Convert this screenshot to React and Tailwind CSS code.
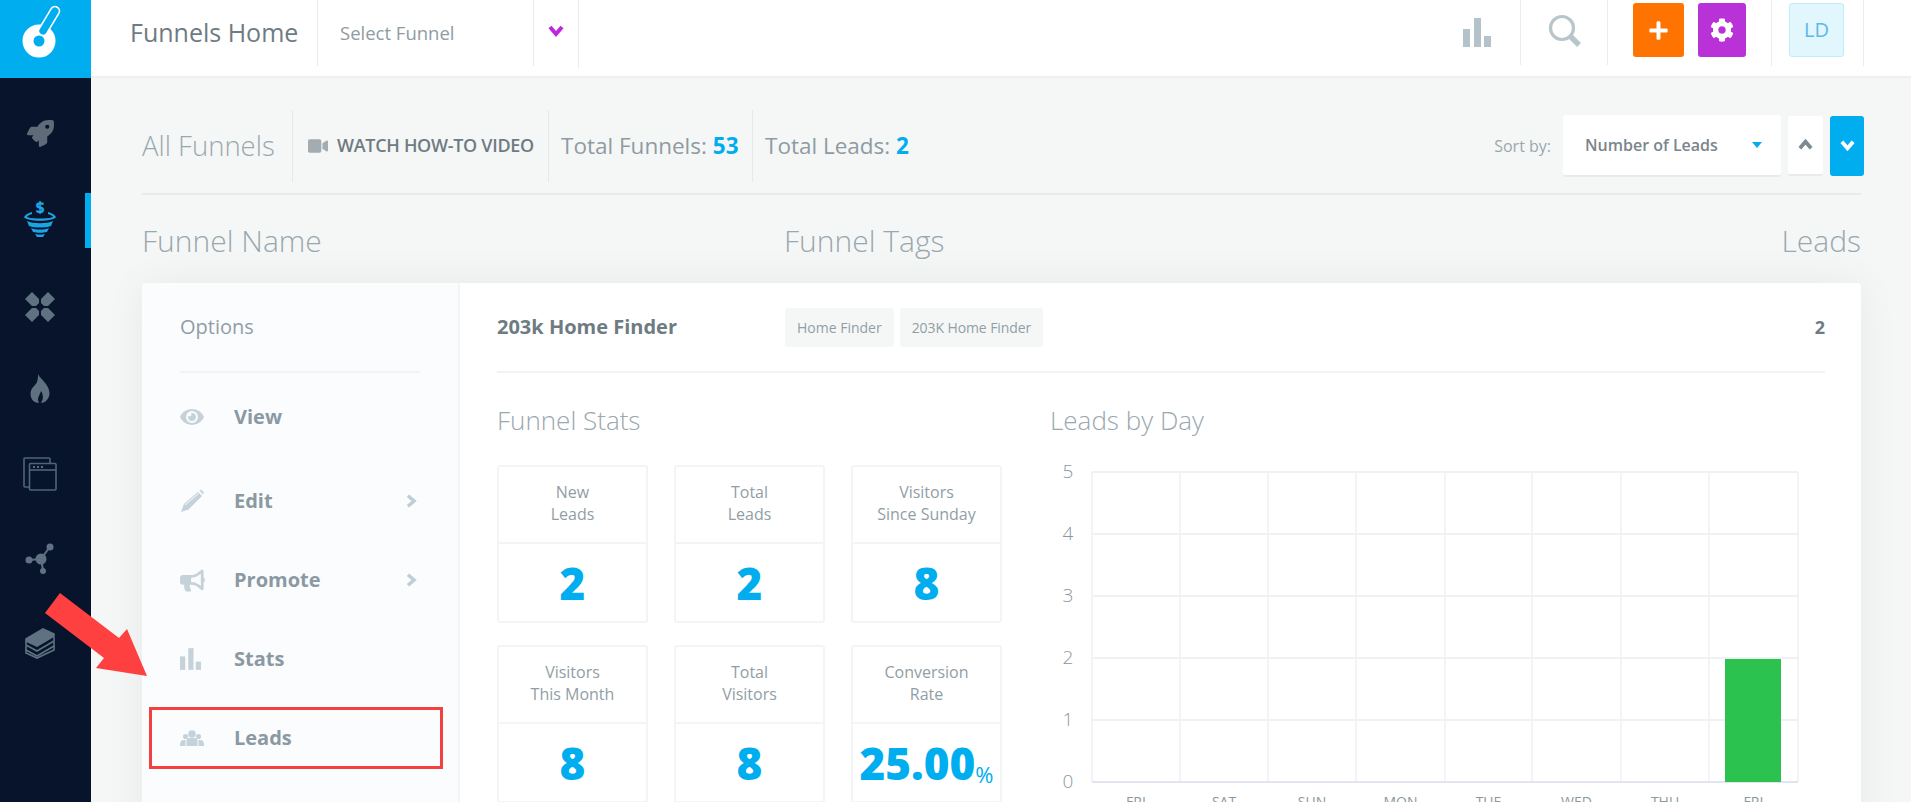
import React from "react";
import { FaBullhorn, FaCog, FaEye, FaPlus, FaRocket, FaVideo } from "react-icons/fa";

const BarsIcon = ({ className }) => (
  <svg viewBox="0 0 28 29" className={className} fill="currentColor">
    <rect x="0" y="11" width="7" height="18" />
    <rect x="11" y="0" width="7" height="29" />
    <rect x="21" y="18" width="7" height="11" />
  </svg>
);

const Logo = () => (
  <svg viewBox="0 0 91 77" className="w-[91px] h-[77px]">
    <circle cx="39" cy="41" r="11" fill="none" stroke="#fff" strokeWidth="11" />
    <g transform="rotate(31 49 21)">
      <rect x="44.5" y="5" width="9" height="32" rx="4.5" fill="#00aeef" stroke="#fff" strokeWidth="1.6" />
    </g>
  </svg>
);

const FunnelIcon = () => (
  <svg viewBox="0 0 34 36" className="w-[34px] h-[36px]" fill="#1ba5e6">
    <text x="17" y="12" textAnchor="middle" fontSize="15" fontWeight="800" fontFamily="'Open Sans', sans-serif">$</text>
    <path d="M1 16 C3 13 6 12 9 11 L9 13 C6 14 4 15 4 16 C8 18 26 18 30 16 C30 15 28 14 25 13 L25 11 C28 12 31 13 33 16 C30 21 4 21 1 16Z" />
    <path d="M4 20 C10 23 24 23 30 20 L28 25 C22 27 12 27 6 25Z" />
    <path d="M8 27 C13 29 21 29 26 27 L24 31 C20 32 14 32 10 31Z" />
    <path d="M12 33 C15 34 19 34 22 33 L20 36 L14 36Z" />
  </svg>
);

const CrossIcon = () => (
  <svg viewBox="0 0 30 30" className="w-[30px] h-[30px]" fill="#5f7282">
    <path d="M7 0 L14 7 L14 11 L11 14 L7 14 L0 7Z" />
    <path d="M23 0 L30 7 L23 14 L19 14 L16 11 L16 7Z" />
    <path d="M7 16 L11 16 L14 19 L14 23 L7 30 L0 23Z" />
    <path d="M19 16 L23 16 L30 23 L23 30 L16 23 L16 19Z" />
  </svg>
);

const FlameIcon = () => (
  <svg viewBox="0 0 20 29" className="w-[20px] h-[29px]" fill="#5f7282">
    <path d="M8 0 C10 5 19 10 19.500 19 C19.500 25 15 29 11 29 C13 26 14 22 11 17 C10 20 8 23 8 25 C8 27 8.500 28 9 29 C4 29 0.500 25 0.500 20 C0.500 14 5 12 7 8 C8 5 8 2 8 0Z" />
  </svg>
);

const WindowsIcon = () => (
  <svg viewBox="0 0 34 34" className="w-[34px] h-[34px]" fill="none" stroke="#4f6477" strokeWidth="1.6">
    <path d="M6 30 H2 Q1 30 1 29 V2 Q1 1 2 1 H26 Q27 1 27 2 V6" />
    <rect x="6.500" y="6.500" width="26.500" height="26.500" rx="1" />
    <path d="M6.500 13 H33" />
    <path d="M10 10 h2 M14 10 h2 M18 10 h2" strokeWidth="1.4" stroke="#7a8b9a" />
  </svg>
);

const NodesIcon = () => (
  <svg viewBox="0 0 30 32" className="w-[30px] h-[32px]" fill="#5f7282" stroke="#5f7282">
    <path d="M16 16 L24 5 M16 16 L4 17 M16 16 L18 27" strokeWidth="2" />
    <circle cx="16" cy="16" r="5.500" stroke="none" />
    <circle cx="25" cy="4" r="3.500" stroke="none" />
    <circle cx="4" cy="17" r="3.500" stroke="none" />
    <circle cx="18" cy="28" r="3" stroke="none" />
  </svg>
);

const LayersIcon = () => (
  <svg viewBox="0 0 30 31" className="w-[30px] h-[31px]" fill="none" stroke="#5f7282" strokeWidth="1.6">
    <path d="M1 11 L18 1 L29 6 L29 8 L12 18 L1 13Z" fill="#5f7282" />
    <path d="M1 13 V17 L12 23 L29 13 V9" />
    <path d="M1 18 V22 L12 28 L29 18 V14" />
    <path d="M1 22 V25 L12 30 L29 22 V18" />
  </svg>
);

// thick short chevron used in the menu and the sort buttons
const Chevron = ({ d, className }) => (
  <svg viewBox="0 0 16 16" className={className} fill="none" stroke="currentColor" strokeWidth="4">
    <path d={d} />
  </svg>
);
const DOWN = "M2 4 L8 11 L14 4";
const UP = "M2 12 L8 5 L14 12";
const RIGHT = "M4.500 2 L11.500 8 L4.500 14";

const PencilIcon = () => (
  <svg viewBox="0 0 24 24" className="w-[24px] h-[24px]" fill="currentColor">
    <path d="M1 23 L4 15 L18 3 L22 7 L8.500 20.500Z" />
    <path d="M19.500 1.500 L21 0.500 L24 3.500 L23 5.500Z" />
    <path d="M5 16 L18.500 4.500" stroke="#fbfcfe" strokeWidth="1" />
  </svg>
);

const UsersIcon = () => (
  <svg viewBox="0 0 24 16" className="w-[24px] h-[16px]" fill="currentColor">
    <circle cx="12" cy="4" r="3.800" />
    <path d="M6.500 16 V10.500 Q6.500 8 9 8 H15 Q17.500 8 17.500 10.500 V16Z" />
    <circle cx="5.500" cy="6.500" r="2.600" />
    <path d="M0 15 Q0 10.500 3 10 H5.500 V16 H0Z" />
    <circle cx="18.500" cy="6.500" r="2.600" />
    <path d="M24 15 Q24 10.500 21 10 H18.500 V16 H24Z" />
  </svg>
);

const navItems = [
  { icon: <FaRocket className="text-[27px] text-[#5f6b78]" /> },
  { icon: <FunnelIcon />, active: true },
  { icon: <CrossIcon />, extra: "pt-[7px]" },
  { icon: <FlameIcon /> },
  { icon: <WindowsIcon /> },
  { icon: <NodesIcon /> },
  { icon: <LayersIcon /> },
];

const stats = [
  { top: "New", bottom: "Leads", value: "2" },
  { top: "Total", bottom: "Leads", value: "2" },
  { top: "Visitors", bottom: "Since Sunday", value: "8" },
  { top: "Visitors", bottom: "This Month", value: "8" },
  { top: "Total", bottom: "Visitors", value: "8" },
  { top: "Conversion", bottom: "Rate", value: "25.00", unit: "%" },
];

const options = [
  { label: "View", icon: <FaEye className="text-[24px]" />, h: "h-[88px]" },
  { label: "Edit", icon: <PencilIcon />, arrow: true, h: "h-[80px]" },
  { label: "Promote", icon: <FaBullhorn className="text-[25px]" />, arrow: true, h: "h-[78px]" },
  { label: "Stats", icon: <BarsIcon className="w-[21px] h-[22px]" />, h: "h-[80px]" },
];

const Chart = () => {
  const ys = [10, 72, 134, 196, 258, 320];
  const xs = [42, 130, 218, 306, 395, 482, 571, 659, 748];
  const days = ["FRI", "SAT", "SUN", "MON", "TUE", "WED", "THU", "FRI"];
  return (
    <svg viewBox="0 0 775 340" className="w-[775px] h-[340px] overflow-visible">
      {ys.map((y, i) => (
        <g key={y}>
          <line x1="42" x2="748" y1={y} y2={y} stroke="#eff1f3" strokeWidth="2" />
          <text x="18" y={y + 6} textAnchor="middle" fontSize="19" fill="#8b98a0" fontWeight="300" fontFamily="'Open Sans', sans-serif">
            {5 - i}
          </text>
        </g>
      ))}
      {xs.map((x) => (
        <line key={x} x1={x} x2={x} y1="10" y2="320" stroke="#eff1f3" strokeWidth="1.500" />
      ))}
      <line x1="42" x2="748" y1="320" y2="320" stroke="#e2e5f0" strokeWidth="2" />
      <rect x="675" y="197" width="56" height="123" fill="#2bc24f" />
      {days.map((d, i) => (
        <text key={i} x={(xs[i] + xs[i + 1]) / 2} y="345" textAnchor="middle" fontSize="14" fill="#8b98a0" fontFamily="'Open Sans', sans-serif">
          {d}
        </text>
      ))}
    </svg>
  );
};

const App = () => {
  return (
    <div className="relative flex w-full h-screen overflow-hidden bg-[#f5f7f7] font-['Open_Sans',sans-serif]">
      {/* sidebar */}
      <aside className="w-[91px] shrink-0 bg-[#08142b]">
        <div className="h-[78px] bg-[#00aeef]">
          <Logo />
        </div>
        <div className="pt-[13px]">
          {navItems.map((item, i) => (
            <div key={i} className={`relative flex items-center justify-center h-[85px] ${item.extra || ""}`}>
              <div className="mr-[11px] flex">{item.icon}</div>
              {item.active && <span className="absolute right-0 top-[17px] w-[6px] h-[55px] bg-[#00aeef]" />}
            </div>
          ))}
        </div>
      </aside>

      <div className="flex-1 min-w-0">
        {/* top bar */}
        <header className="flex h-[78px] pr-[47px] bg-white border-b-2 border-[#eef0f1]">
          <div className="w-[226px] pl-[39px] h-[66px] flex items-center text-[25px] text-[#6f7b82] whitespace-nowrap">Funnels Home</div>
          <div className="w-[216px] pl-[22px] h-[66px] flex items-center text-[18.5px] text-[#8f9ba2] border-l border-[#eaeced]">
            Select Funnel
          </div>
          <div className="w-[45px] h-[66px] pb-[5px] flex items-center justify-center border-l border-[#eaeced]">
            <Chevron d={DOWN} className="w-[16px] h-[16px] text-[#c026e0]" />
          </div>
          <div className="flex-1 h-[68px] border-l border-[#eaeced] flex items-start justify-end pt-[18px] pr-[29px]">
            <BarsIcon className="w-[28px] h-[29px] text-[#b4c3ca]" />
          </div>
          <div className="w-[87px] h-[65px] border-l border-[#eaeced] pt-[14px] pl-[27px]">
            <svg viewBox="0 0 34 34" className="w-[34px] h-[34px]" fill="none" stroke="#b8c5cb">
              <circle cx="14" cy="14" r="11.500" strokeWidth="3.200" />
              <path d="M22 22 L31 31" strokeWidth="5.500" />
            </svg>
          </div>
          <div className="w-[164px] h-[65px] border-l border-[#eaeced] pl-[25px] pt-[3px] flex items-start gap-[14px]">
            <div className="w-[51px] h-[54px] rounded-[3px] bg-[#ff7300] flex items-center justify-center">
              <FaPlus className="text-[21px] text-white" />
            </div>
            <div className="w-[48px] h-[54px] rounded-[3px] bg-[#b832d8] flex items-center justify-center">
              <FaCog className="text-[24px] text-white" />
            </div>
          </div>
          <div className="w-[93px] h-[66px] border-l border-r border-[#eaeced] pl-[17px] pt-[3px]">
            <div className="w-[55px] h-[54px] rounded-[3px] bg-[#e1f6fd] border border-[#bdeefc] flex items-center justify-center text-[20px] text-[#5cb9ea]">
              LD
            </div>
          </div>
        </header>

        <main className="pl-[51px] pr-[47px]">
          {/* sub header */}
          <div className="flex items-center h-[117px] pt-[20px] mr-[3px] border-b-2 border-[#e8ebeb] -mb-[1px]">
            <div className="w-[151px] h-[72px] border-r border-[#e6e9e9] flex items-center text-[27.5px] font-light text-[#9aa7ae] whitespace-nowrap">
              All Funnels
            </div>
            <div className="w-[256px] h-[72px] border-r border-[#e6e9e9] pl-[15px] flex items-center gap-[9px] text-[#6f7b82]">
              <FaVideo className="text-[20px] text-[#a3acb1]" />
              <span className="text-[18px] font-semibold tracking-[-0.3px] whitespace-nowrap">WATCH HOW-TO VIDEO</span>
            </div>
            <div className="w-[204px] h-[72px] border-r border-[#e6e9e9] pl-[12px] flex items-center text-[22.5px] text-[#8f9ba2] whitespace-nowrap">
              Total Funnels:&nbsp;<span className="font-bold text-[#00aeef]">53</span>
            </div>
            <div className="pl-[12px] flex items-center text-[22.5px] text-[#8f9ba2] whitespace-nowrap">
              Total Leads:&nbsp;<span className="font-bold text-[#00aeef]">2</span>
            </div>

            <div className="ml-auto flex items-center mr-[-3px]">
              <span className="text-[16px] text-[#9aa7ae] mr-[12px]">Sort by:</span>
              <div className="w-[218px] h-[62px] bg-white rounded-[3px] border-b-2 border-[#e8ebec] flex items-center justify-between pl-[22px] pr-[19px] text-[16px] font-semibold text-[#7a858c]">
                <span>Number of Leads</span>
                <span className="w-0 h-0 border-l-[5px] border-r-[5px] border-t-[6px] border-l-transparent border-r-transparent border-t-[#00aeef]" />
              </div>
              <div className="ml-[7px] w-[35px] h-[60px] bg-white rounded-[3px] border-b-2 border-[#e8ebec] flex items-center justify-center">
                <Chevron d={UP} className="w-[15px] h-[15px] text-[#7d8a91]" />
              </div>
              <div className="ml-[7px] w-[34px] h-[60px] bg-[#00aeef] rounded-[3px] flex items-center justify-center">
                <Chevron d={DOWN} className="w-[15px] h-[15px] text-white" />
              </div>
            </div>
          </div>

          {/* table headings */}
          <div className="flex items-center h-[89px] pt-[3px] mr-[3px] text-[30px] font-light text-[#9aa7ae]">
            <div className="w-[642px]">Funnel Name</div>
            <div>Funnel Tags</div>
            <div className="ml-auto">Leads</div>
          </div>

          {/* funnel card */}
          <section className="flex mr-[3px] h-[600px] bg-white rounded-[4px] shadow-[0_0_40px_rgba(0,0,0,0.06)]">
            <div className="w-[318px] shrink-0 bg-[#fbfcfe] border-r-2 border-[#f3f5f6] rounded-l-[4px]">
              <div className="mx-[38px] h-[90px] pt-[30px] border-b-2 border-[#f1f3f5] text-[20px] leading-[28px] text-[#8f9ea6]">Options</div>
              <div className="pl-[38px] pr-[40px]">
                {options.map((o) => (
                  <div key={o.label} className={`flex items-center text-[#8a99a2] ${o.h}`}>
                    <div className="w-[54px] flex text-[#c6d2d9]">{o.icon}</div>
                    <span className="text-[20px] font-bold">{o.label}</span>
                    {o.arrow && <Chevron d={RIGHT} className="ml-auto w-[14px] h-[14px] text-[#bfcdd4]" />}
                  </div>
                ))}
                <div className="relative flex items-center h-[62px] text-[#8a99a2] mt-[8px]">
                  <div className="w-[54px] flex text-[#c6d2d9]">
                    <UsersIcon />
                  </div>
                  <span className="text-[20px] font-bold">Leads</span>
                  <div className="absolute left-[-31px] right-[-25px] top-0 bottom-0 border-[3px] border-[#f34040]" />
                </div>
              </div>
            </div>

            <div className="flex-1 min-w-0 pl-[37px] pr-[36px]">
              <div className="flex items-center h-[90px] border-b-2 border-[#f1f3f5]">
                <div className="w-[288px] text-[20px] font-bold text-[#6f7b82]">203k Home Finder</div>
                <div className="h-[39px] px-[12px] rounded-[3px] bg-[#f5f7f7] flex items-center text-[14px] text-[#929ea5]">Home Finder</div>
                <div className="ml-[6px] h-[39px] px-[12px] rounded-[3px] bg-[#f5f7f7] flex items-center text-[14px] tracking-[-0.1px] text-[#929ea5]">203K Home Finder</div>
                <div className="ml-auto text-[18px] font-bold text-[#6f7b82]">2</div>
              </div>

              <div className="flex pt-[31px]">
                <div className="w-[505px] shrink-0">
                  <h3 className="text-[26px] font-light leading-[32px] text-[#9aa7ae] mb-[29px]">Funnel Stats</h3>
                  <div className="grid grid-cols-3 gap-x-[26px] gap-y-[22px]">
                    {stats.map((s, i) => (
                      <div key={i} className="h-[158px] rounded-[3px] border-2 border-[#f3f4f5] text-center">
                        <div className="h-[77px] pb-[3px] flex flex-col justify-center border-b-2 border-[#f3f4f5] text-[16px] leading-[22px] text-[#929ea5]">
                          <div>{s.top}</div>
                          <div>{s.bottom}</div>
                        </div>
                        <div className="h-[77px] flex items-center justify-center font-extrabold text-[44px] leading-none text-[#00aeef]">
                          {s.value}
                          {s.unit && <span className="self-end mb-[16px] text-[22px] font-normal">{s.unit}</span>}
                        </div>
                      </div>
                    ))}
                  </div>
                </div>
                <div className="ml-[48px] flex-1 min-w-0">
                  <h3 className="text-[26px] font-light leading-[32px] text-[#9aa7ae] mb-[26px]">Leads by Day</h3>
                  <Chart />
                </div>
              </div>
            </div>
          </section>
        </main>
      </div>

      {/* annotation arrow */}
      <svg className="absolute left-0 top-0 w-[160px] h-[680px] pointer-events-none" viewBox="0 0 160 680">
        <polygon points="60,593 45,613 104,658 96,668 147,676 127,629 119,638" fill="#ff4040" />
      </svg>
    </div>
  );
};

export default App;
